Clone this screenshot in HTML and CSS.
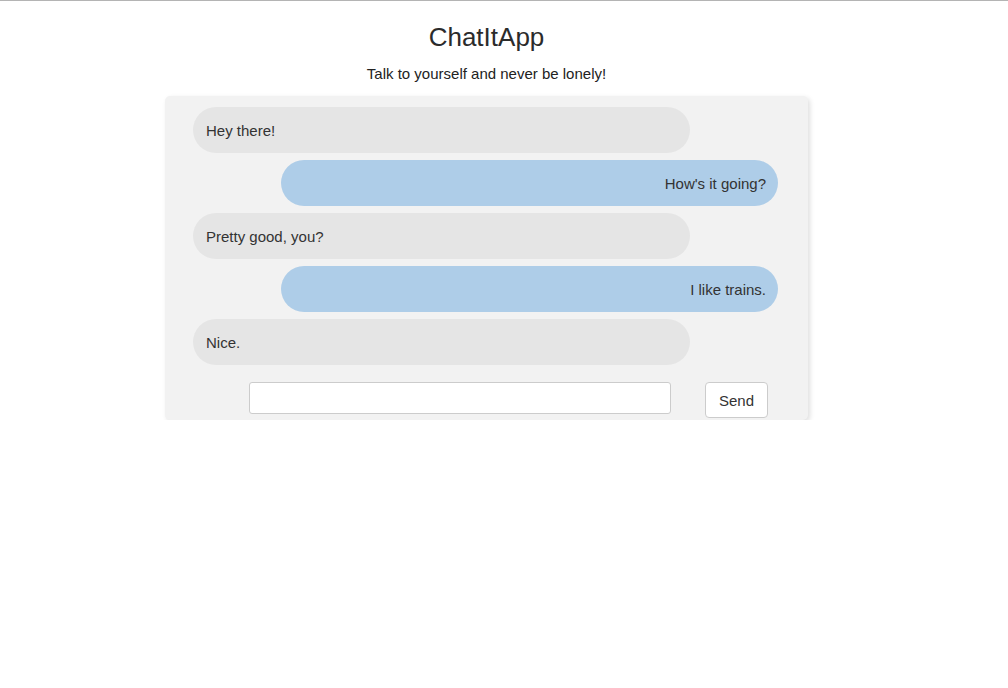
FILE: index.html
```html
<!DOCTYPE html>
<html>
<head>
<meta charset="utf-8">
<link rel="stylesheet" href="styles.css">
</head>
<body>
<div class="page">
  <h1 class="title">ChatItApp</h1>
  <p class="subtitle">Talk to yourself and never be lonely!</p>
  <div class="chat">
    <div class="messages">
      <div class="bubble left">Hey there!</div>
      <div class="bubble right">How's it going?</div>
      <div class="bubble left">Pretty good, you?</div>
      <div class="bubble right">I like trains.</div>
      <div class="bubble left">Nice.</div>
    </div>
    <form class="composer">
      <input class="text-input" type="text">
      <button class="send" type="button">Send</button>
    </form>
  </div>
</div>
</body>
</html>
```
FILE: styles.css
```css
html, body {
  margin: 0;
  padding: 0;
  background: #fff;
}
body {
  font-family: "Liberation Sans", Arial, sans-serif;
  color: #333;
  border-top: 1px solid #b4b4b4;
}
.page {
  width: 973px;
  padding-top: 21px;
  text-align: center;
}
.title {
  margin: 0;
  font-size: 26px;
  font-weight: normal;
  line-height: 30px;
  color: #2b2b2b;
}
.subtitle {
  margin: 12px 0 0;
  font-size: 15px;
  line-height: 20px;
  color: #222;
}
.chat {
  width: 643px;
  margin: 12px auto 0;
  background: #f2f2f2;
  border-radius: 5px;
  box-shadow: 2px 2px 5px rgba(0, 0, 0, 0.13);
  padding: 11px 30px 2px 28px;
  box-sizing: border-box;
  text-align: left;
}
.messages {
  display: flex;
  flex-direction: column;
  gap: 7px;
}
.bubble {
  width: 497px;
  box-sizing: border-box;
  height: 46px;
  padding: 14px 13px 12px;
  font-size: 15px;
  line-height: 20px;
  border-radius: 23px;
  color: #333;
}
.left {
  background: #e5e5e5;
  align-self: flex-start;
}
.right {
  background: #aecde8;
  align-self: flex-end;
  text-align: right;
  padding-right: 12px;
}
.composer {
  display: flex;
  align-items: flex-start;
  margin: 17px 0 0;
  padding-left: 56px;
}
.text-input {
  width: 422px;
  height: 32px;
  box-sizing: border-box;
  border: 1px solid #ccc;
  border-radius: 3px;
  background: #fff;
  margin: 0;
  padding: 0 8px;
  font: 15px "Liberation Sans", Arial, sans-serif;
}
.send {
  margin-left: 34px;
  width: 63px;
  height: 36px;
  box-sizing: border-box;
  border: 1px solid #ccc;
  border-radius: 4px;
  background: #fff;
  color: #333;
  font: 15px "Liberation Sans", Arial, sans-serif;
  padding: 0;
}
```
